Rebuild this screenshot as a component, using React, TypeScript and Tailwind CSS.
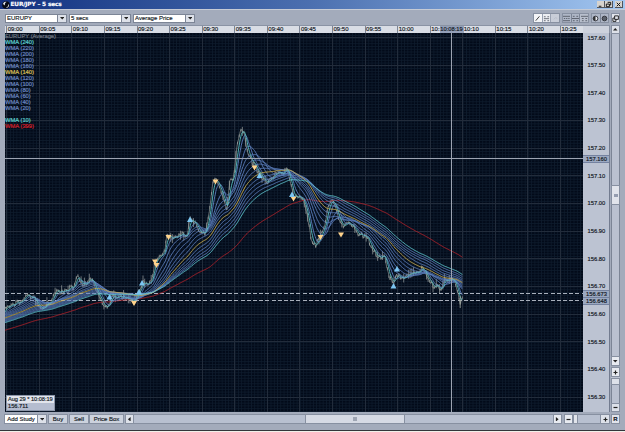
import type { ReactNode } from 'react'

type Point = [number, number]

const TIMES = [
  '09:00', '09:05', '09:10', '09:15', '09:20', '09:25', '09:30', '09:35', '09:40',
  '09:45', '09:50', '09:55', '10:00', '10:', '10:10', '10:15', '10:20', '10:25',
]

const PRICES = [
  '157.60', '157.50', '157.40', '157.30', '157.20', '157.10', '157.00',
  '156.90', '156.80', '156.70', '156.60', '156.50', '156.40', '156.30',
]

const BLUE = '#6c87c0'
const TEAL = '#5ed0d0'
const GOLD = '#dcc058'
const LINE = '#5c7fbe'

const LEGEND = [
  { text: 'EURUPY (Average)', color: '#6e7682' },
  { text: 'WMA (240)', color: TEAL },
  { text: 'WMA (220)', color: BLUE },
  { text: 'WMA (200)', color: BLUE },
  { text: 'WMA (180)', color: BLUE },
  { text: 'WMA (160)', color: BLUE },
  { text: 'WMA (140)', color: GOLD },
  { text: 'WMA (120)', color: BLUE },
  { text: 'WMA (100)', color: BLUE },
  { text: 'WMA (80)', color: BLUE },
  { text: 'WMA (60)', color: BLUE },
  { text: 'WMA (40)', color: BLUE },
  { text: 'WMA (20)', color: BLUE },
  { text: '', color: BLUE },
  { text: 'WMA (10)', color: TEAL },
  { text: 'WMA (399)', color: '#d02028' },
]

// Turning points of the price, the first one is history for the long averages
const PIVOTS: Point[] = [
  [-230, 374], [5, 311], [7, 305], [13, 304], [20, 303], [25, 295], [28, 296], [33, 297],
  [38, 306], [43, 308], [50, 302], [55, 292], [62, 291], [68, 289], [73, 288], [77, 276],
  [83, 286], [91, 278], [95, 287], [98, 295], [106, 308], [112, 297], [120, 296], [127, 298],
  [133, 301], [137, 297], [140, 290], [143, 281], [148, 284], [152, 280], [155, 262],
  [158, 258], [162, 254], [165, 250], [167, 236], [173, 237], [180, 235], [187, 234],
  [190, 219], [195, 224], [200, 230], [205, 236], [210, 207], [213, 182], [216, 179],
  [222, 193], [227, 212], [230, 180], [233, 181], [237, 146], [241, 130], [244, 132],
  [248, 153], [253, 163], [260, 175], [268, 183], [275, 173], [281, 173], [288, 170], [292, 187],
  [294, 196], [303, 198], [307, 212], [311, 238], [315, 246], [320, 236], [325, 223],
  [329, 203], [333, 200], [338, 217], [343, 226], [350, 222], [357, 233], [367, 238],
  [372, 247], [378, 257], [385, 256], [388, 272], [393, 286], [397, 275], [403, 277],
  [409, 276], [415, 273], [423, 268], [428, 278], [433, 287], [437, 284], [440, 292], [444, 280],
  [452, 278], [455, 283], [459, 298], [460.5, 305], [462.5, 298],
]

const STEP = 0.543

function noise(i: number) {
  const v = Math.sin(i * 12.9898) * 43758.5453
  return v - Math.floor(v) - 0.5
}

function buildSeries(): Point[] {
  const out: Point[] = []
  let seg = 0
  for (let i = 0; ; i++) {
    const x = PIVOTS[0][0] + i * STEP
    if (x > 462.5) break
    while (x > PIVOTS[seg + 1][0]) seg++
    const [x0, y0] = PIVOTS[seg]
    const [x1, y1] = PIVOTS[seg + 1]
    const y = y0 + ((x - x0) / (x1 - x0)) * (y1 - y0)
    out.push([x, y + noise(Math.floor(i / 3)) * 5])
  }
  return out
}

const series = buildSeries()

function wma(period: number) {
  let d = ''
  series.forEach(([x], i) => {
    if (x < 4) return
    let sum = 0
    let weights = 0
    for (let k = 0; k < period && i - k >= 0; k++) {
      sum += series[i - k][1] * (period - k)
      weights += period - k
    }
    d += `${d ? 'L' : 'M'}${x.toFixed(1)} ${(sum / weights).toFixed(1)}`
  })
  return d
}

const AVERAGES = [
  { period: 399, color: '#b4222a' },
  { period: 220, color: LINE },
  { period: 200, color: LINE },
  { period: 180, color: LINE },
  { period: 160, color: LINE },
  { period: 120, color: LINE },
  { period: 100, color: LINE },
  { period: 80, color: LINE },
  { period: 60, color: LINE },
  { period: 40, color: LINE },
  { period: 20, color: LINE },
  { period: 140, color: '#d4b650' },
  { period: 240, color: '#62ccd6' },
  { period: 10, color: '#58c0c2' },
]

const bars = series
  .filter(([x], i) => x > 5 && i % 3 === 0)
  .map(([x, y], i) => {
    const spike = noise(i + 71) > 0.3 ? 5 : 1.5
    return `M${x.toFixed(1)} ${(y - spike).toFixed(1)}V${(y + spike * 0.8).toFixed(1)}`
  })
  .join('')

const priceLine = series
  .filter(([x]) => x > 4)
  .map(([x, y], i) => `${i ? 'L' : 'M'}${x.toFixed(1)} ${y.toFixed(1)}`)
  .join('')

const SELLS: Point[] = [
  [134, 303], [155, 261.5], [156.5, 265], [168.5, 237], [215.5, 181.5],
  [254.5, 167.5], [293.5, 198.5], [320.5, 237], [341, 234.5],
]
const BUYS: Point[] = [
  [109.5, 297], [139, 292], [142, 283], [190, 219.5], [259.5, 175.5],
  [292, 194.5], [393.5, 286], [397, 269],
]

function Chart() {
  return (
    <svg viewBox="5 33 578 379" className="block h-[379px] w-[578px] bg-[#020a19]">
      <defs>
        <pattern id="minor" x="6.7" y="37.7" width="3.258" height="2.765" patternUnits="userSpaceOnUse">
          <path d="M0 .4H3.258M.4 0V2.765" stroke="#0e1b2c" strokeWidth=".8" />
        </pattern>
      </defs>
      <rect x="5" y="33" width="578" height="379" fill="url(#minor)" />
      <g stroke="#222c3b" shapeRendering="crispEdges">
        {TIMES.map((t, i) => (
          <path key={t} d={`M${6.7 + i * 32.58} 33V412`} />
        ))}
        {PRICES.map((p, i) => (
          <path key={p} d={`M5 ${37.7 + i * 27.65}H583`} />
        ))}
      </g>
      <g stroke="#a9b0bc" strokeDasharray="4 2.2" shapeRendering="crispEdges">
        <path d="M5 293.5H583" />
        <path d="M5 300.5H583" />
      </g>
      <g fill="none" strokeLinejoin="round">
        <path d={bars} stroke="#8f9496" strokeWidth=".75" />
        <path d={priceLine} stroke="#a5aca4" strokeWidth=".6" />
        {AVERAGES.map((a) => (
          <path key={a.period} d={wma(a.period)} stroke={a.color} strokeWidth=".9" />
        ))}
        <path d="M460.2 296V308" stroke="#a5aca4" strokeWidth=".8" />
      </g>
      <g fill="#ffd38c">
        {SELLS.map(([x, y]) => (
          <path key={x} d={`M${x - 3} ${y - 2}H${x + 3}L${x} ${y + 3}Z`} />
        ))}
      </g>
      <g fill="#7cc6f2">
        {BUYS.map(([x, y]) => (
          <path key={x} d={`M${x - 3} ${y + 2.5}H${x + 3}L${x} ${y - 3}Z`} />
        ))}
      </g>
      <g stroke="#9da4b2" shapeRendering="crispEdges">
        <path d="M5 158.5H583" />
        <path d="M451.5 33V412" />
      </g>
    </svg>
  )
}

function Arrow({ dir }: { dir: 'up' | 'down' | 'left' | 'right' }) {
  const d = {
    up: 'M0 4L2.5 1L5 4Z',
    down: 'M0 1H5L2.5 4Z',
    left: 'M4 0V5L1 2.5Z',
    right: 'M1 0V5L4 2.5Z',
  }[dir]
  return (
    <svg viewBox="0 0 5 5" className="size-[4.5px]">
      <path d={d} fill="#222" />
    </svg>
  )
}

function Select({ value }: { value: string }) {
  return (
    <div className="flex h-[9px] w-[62px] border border-[#7c8596] bg-white">
      <span className="flex-1 pl-px leading-[7px] whitespace-nowrap">{value}</span>
      <span className="flex w-[9px] items-center justify-center border-l border-[#7c8596] bg-[#dde1e9]">
        <Arrow dir="down" />
      </span>
    </div>
  )
}

function Cell({ children, className = '' }: { children?: ReactNode; className?: string }) {
  return (
    <div className={`flex shrink-0 items-center justify-center border border-[#8790a1] ${className}`}>
      {children}
    </div>
  )
}

function Sign({ plus = false }: { plus?: boolean }) {
  return (
    <svg viewBox="0 0 5 5" className="size-[5px]">
      <path d={plus ? 'M.5 2.5H4.5M2.5 .5V4.5' : 'M.5 2.5H4.5'} stroke="#222" strokeWidth="1.2" />
    </svg>
  )
}

function Tool({ d, className, color = '#4a4f5a' }: { d: string; className: string; color?: string }) {
  return (
    <span className={`flex h-full flex-1 items-center justify-center ${className}`}>
      <svg viewBox="0 0 8 8" className="size-[7px]">
        <path d={d} stroke={color} strokeWidth=".9" fill="none" />
      </svg>
    </span>
  )
}

function Knob({ half = false }: { half?: boolean }) {
  return (
    <span className="flex h-full flex-1 items-center justify-center border-r border-[#7c8596] last:border-r-0">
      <svg viewBox="0 0 8 8" className="size-[7px]">
        <circle cx="4" cy="4" r="2.7" fill={half ? '#333' : '#5b606a'} stroke="#2a2d33" strokeWidth="1" />
        {half && <path d="M4 1.8A2.2 2.2 0 0 1 4 6.2Z" fill="#e6e8ee" />}
      </svg>
    </span>
  )
}

function TitleBar() {
  return (
    <div className="flex h-[9px] items-center bg-linear-to-r from-[#123080] via-[#4c70b0] to-[#a2c6f0] pr-[2px] pl-[2px]">
      <svg viewBox="0 0 8 8" className="size-[8px]">
        <circle cx="4" cy="4" r="3.8" fill="#080c14" />
        <path d="M1 3C1.5 1 3.5 .5 4.5 1C3 1.5 2.5 3 3 4.5ZM4 6.5C6 6 6.5 4.5 6 3C8 4.5 6.5 7.5 4 6.5Z" fill="#e8ecf4" />
      </svg>
      <span className="ml-[0.5px] flex-1 font-['DejaVu_Sans'] text-[5.8px] leading-[9px] font-bold tracking-[-0.12px] text-white">
        EUR/JPY – 5 secs
      </span>
      {['M2 6H5', 'M3 1.5H6.5V4.5H5M1.5 3.5H5V6.5H1.5Z', 'M2 2L6 6M6 2L2 6'].map((d, i) => (
        <span
          key={d}
          className={`flex h-[7px] w-[8px] items-center justify-center border-r border-b border-[#50545c] bg-[#d6d3ce] ${i === 2 ? 'ml-[2px]' : 'ml-[0.5px]'}`}
        >
          <svg viewBox="0 0 8 8" className="size-[7px]">
            <path d={d} stroke="#111" strokeWidth="1.1" fill="none" />
          </svg>
        </span>
      ))}
    </div>
  )
}

function Toolbar() {
  return (
    <div className="flex h-[15px] items-center gap-[2px] pt-[3px] pr-[5px] pb-[2px] pl-[5px]">
      <Select value="EURUPY" />
      <Select value="5 secs" />
      <Select value="Average Price" />
      <div className="flex-1" />
      <Cell className="h-[10px] w-[27px] bg-[#c3c9d5]">
        <Tool className="bg-[#f4f5f8]" d="M2 6.5L6.2 1.5" color="#111" />
        <Tool className="border-x border-[#9aa2b2] bg-[#eceef3]" d="M1 2H3M5 2H7M1 4.2H7M1 6.5H3M5 6.5H7" />
        <Tool className="bg-[#c8cdd8]" d="M2 5L4 3L6 4" color="#b4bac6" />
      </Cell>
      <Cell className="h-[10px] w-[27px] bg-[#aeb6c6]">
        <Tool className="border-r border-[#7c8596]" d="M0 1.5H8M1 4H2.5M3.5 4H5M6 4H7.5M0 6.5H8" />
        <Tool className="border-r border-[#7c8596]" d="M1 1.5H3M5 1.5H7M0 4H8M1 6.5H3M5 6.5H7" />
        <Tool className="bg-[#b8bfcd]" d="M0 1.5H8M1 4H3M5 4H7M1 6.5H3M5 6.5H7" />
      </Cell>
      <Cell className="h-[10px] w-[18px] bg-[#aeb6c6]">
        <Knob half />
        <Knob />
      </Cell>
      <Cell className="h-[10px] w-[9px] bg-[#e3e6ed]">
        <svg viewBox="0 0 8 8" className="size-[7px]">
          <path d="M3 1H7.3V5H3ZM3 3.5H1V7.3H4.5V5" stroke="#111" strokeWidth="1" fill="none" />
        </svg>
      </Cell>
    </div>
  )
}

function TimeAxis() {
  return (
    <div className="relative flex h-[8px] w-[578px] overflow-hidden border-t border-[#8a93a4] bg-[#d9dde5] pl-[1.2px]">
      {TIMES.map((t) => (
        <span key={t} className="w-[32.58px] shrink-0 border-l border-[#7c8596] pl-[0.5px] leading-[7px]">
          {t}
        </span>
      ))}
      <span className="absolute top-0 left-[434.5px] h-[8px] w-[24px] bg-[#94a0b8] text-center text-[5.8px] leading-[7px] whitespace-nowrap">
        10:08:19
      </span>
    </div>
  )
}

function PriceAxis() {
  return (
    <div className="relative h-[379px] w-[27px] overflow-hidden border-r border-[#737c90] bg-[#bcc3d2]">
      <div className="-mt-[8.4px] flex flex-col">
        {PRICES.map((p) => (
          <span key={p} className="flex h-[27.65px] shrink-0 items-center pl-[4.5px] text-[5.8px]">
            {p}
          </span>
        ))}
      </div>
      <Tag className="top-[122px]" text="157.160" />
      <Tag className="top-[257px]" text="156.673" />
      <Tag className="top-[264px]" text="156.648" />
    </div>
  )
}

function Tag({ text, className }: { text: string; className: string }) {
  return (
    <span
      className={`absolute left-0 h-[7.5px] w-full border-y border-[#7482a0] bg-[#9ca9c1] pl-[3px] text-[5.8px] leading-[6px] ${className}`}
    >
      {text}
    </span>
  )
}

function SideScroll() {
  return (
    <div className="ml-px flex h-[387px] w-[9px] flex-col bg-[#bac1d0]">
      <Cell className="h-[9px] bg-[#dde1e9]"><Arrow dir="up" /></Cell>
      <div className="h-[151px] border-x border-[#7c8596]" />
      <Cell className="h-[20px] bg-[#e1e4eb]">
        <span className="h-[3px] w-[4px] bg-[#959daf]" />
      </Cell>
      <div className="h-[151px] border-x border-[#7c8596]" />
      <Cell className="h-[10px] bg-[#e8ebf1]"><Arrow dir="down" /></Cell>
      <div className="h-px bg-[#9fa8b8]" />
      <Cell className="h-[10px] bg-[#e8ebf1]"><Sign plus /></Cell>
      <Cell className="mt-px h-[7px] bg-[#dde1e9]" />
      <div className="flex-1 border-x border-[#7c8596]" />
      <Cell className="h-[9px] bg-[#dde1e9]"><Sign /></Cell>
    </div>
  )
}

function BottomBar() {
  return (
    <div className="mt-[2px] flex h-[10px] pl-[4px]">
      <Cell className="w-[34px] bg-white whitespace-nowrap">Add Study</Cell>
      <Cell className="-ml-px w-[10px] bg-[#dde1e9]"><Arrow dir="down" /></Cell>
      <Cell className="ml-px w-[20px] bg-[#ccd2dd]">Buy</Cell>
      <Cell className="ml-px w-[20px] bg-[#ccd2dd]">Sell</Cell>
      <Cell className="w-[35px] bg-[#ccd2dd] whitespace-nowrap">Price Box</Cell>
      <Cell className="ml-px w-[9px] bg-[#dde1e9]"><Arrow dir="left" /></Cell>
      <div className="w-[171px] border-y border-[#8790a1] bg-[#b8c0d0]" />
      <Cell className="w-[100px] bg-[#d6dae4]">
        <span className="size-[4px] bg-[#9ea5b3]" />
      </Cell>
      <div className="w-[148px] border-y border-[#8790a1] bg-[#b8c0d0]" />
      <Cell className="w-[9px] bg-[#e8ebf1]"><Arrow dir="right" /></Cell>
      <Cell className="ml-[2px] w-[9px] bg-[#e8ebf1]"><Sign /></Cell>
      <Cell className="w-[5px] bg-[#e1e4eb]" />
      <div className="w-[22px] border-y border-[#8790a1] bg-[#b8c0d0]" />
      <Cell className="w-[10px] bg-[#dde1e9]"><Sign plus /></Cell>
      <Cell className="ml-px w-[9px] bg-[#e1e4eb] font-bold">R</Cell>
    </div>
  )
}

export default function App() {
  return (
    <div className="flex h-[432px] w-[625px] flex-col overflow-hidden bg-[#f2f0ea] font-['Liberation_Sans',sans-serif] text-[6px] leading-none text-[#111722] [-webkit-text-stroke:0.15px_currentColor]">
      <TitleBar />
      <div className="h-[421px] border-t border-[#c6cbd5] bg-[#a3abbb]">
        <Toolbar />
        <div className="flex pl-[5px]">
          <div>
            <TimeAxis />
            <div className="relative">
              <Chart />
              <div className="absolute top-0 left-0 text-[5.8px]">
                {LEGEND.map((l, i) => (
                  <div
                    key={i}
                    className="h-[6px] leading-[6px] whitespace-nowrap [-webkit-text-stroke:0.2px_currentColor]"
                    style={{ color: l.color }}
                  >
                    {l.text}
                  </div>
                ))}
              </div>
              <div className="absolute bottom-px left-[1px] w-[49px] border border-[#8d97aa] bg-[#b5bdd0] text-[5.7px]">
                <div className="h-[7px] bg-[#e2e5ec] pl-[1px] leading-[7px] tracking-[-0.05px] whitespace-nowrap">Aug 29 * 10:08:19</div>
                <div className="h-[7px] pl-[1px] leading-[7px]">156.711</div>
              </div>
            </div>
          </div>
          <div>
            <div className="h-[8px] w-[27px] border-t border-r border-[#8a93a4] bg-[#cdd2dd]" />
            <PriceAxis />
          </div>
          <SideScroll />
        </div>
        <BottomBar />
      </div>
      <div className="h-px bg-[#34363b]" />
    </div>
  )
}
